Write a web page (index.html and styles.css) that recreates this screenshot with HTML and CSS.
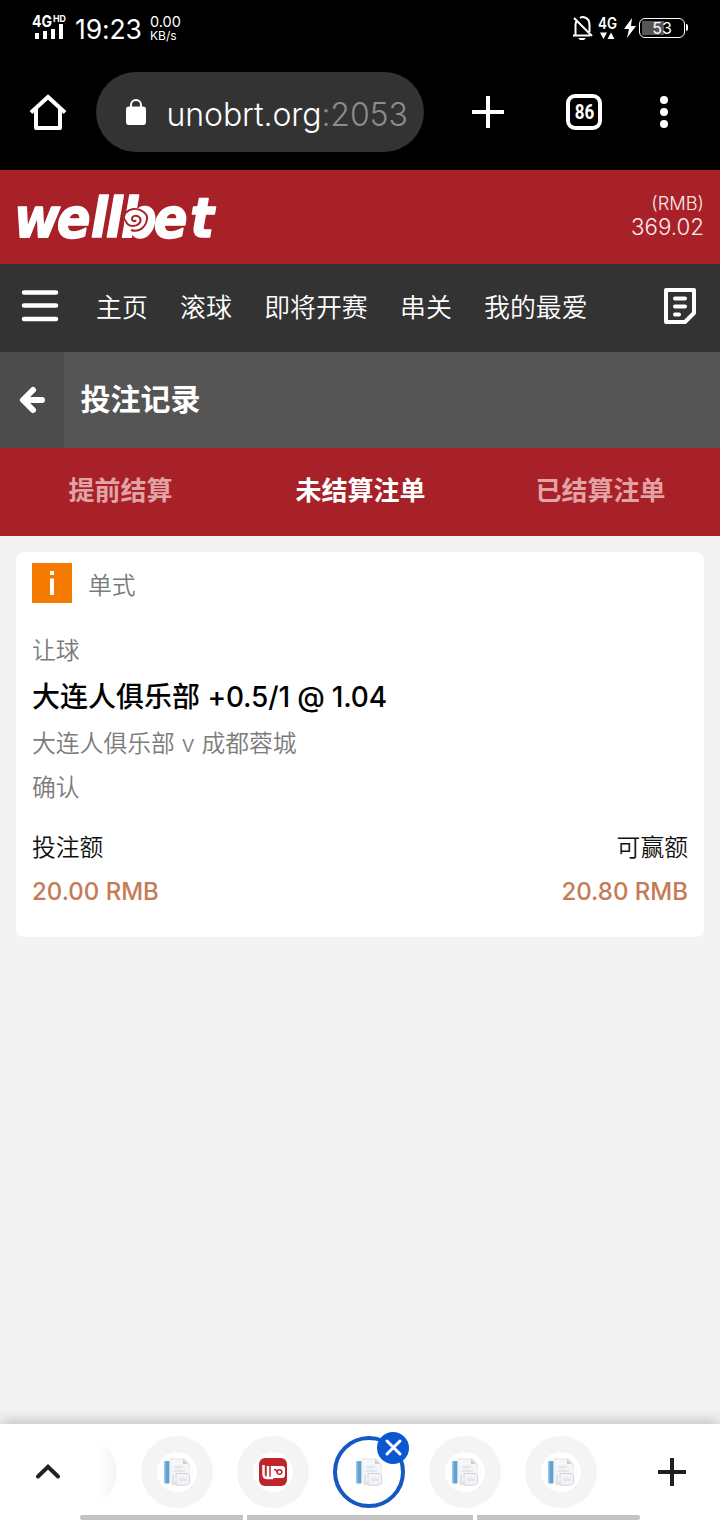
FILE: index.html
```html
<!DOCTYPE html>
<html lang="zh-CN">
<head>
<meta charset="utf-8">
<title>投注记录</title>
<link rel="stylesheet" href="styles.css">
</head>
<body>
<div class="phone">
  <div class="status">
    <div class="signal">
      <svg width="36" height="30" viewBox="0 0 36 30"><text class="net" x="0" y="12.5" textLength="20" lengthAdjust="spacingAndGlyphs">4G</text><text class="hd" x="21" y="8" textLength="13" lengthAdjust="spacingAndGlyphs">HD</text><path d="M5 19v6M13 17v8M21 15v10M29 10v15" stroke="#fff" stroke-width="4" stroke-linecap="butt" fill="none"/></svg>
    </div>
    <span class="clock">19:23</span>
    <div class="speed"><span class="rate">0.00</span><span class="unit">KB/s</span></div>
    <svg class="bell" width="22" height="26" viewBox="0 0 22 26" fill="none" stroke="#fff" stroke-width="2"><path d="M3.500 20V10q0-3 2-5M8 3q2-1.500 5-.5 4.500 1.500 4.500 7.500v7M1 20.500h17M2 3l18 18"/><path d="M6 23h8l-2 2H8z" fill="#fff" stroke="none"/></svg>
    <svg class="data" width="20" height="26" viewBox="0 0 20 26" fill="#fff"><text class="net-small" x="0" y="14" textLength="19" lengthAdjust="spacingAndGlyphs">4G</text><path d="M2 17.500h7L5.500 24zM9.500 24h7L13 17.500z"/></svg>
    <svg class="bolt" width="12" height="20" viewBox="0 0 12 20" fill="#fff"><path d="M8 0 0 11h5l-2 9 9-12H7z"/></svg>
    <div class="battery">53</div>
  </div>

  <div class="browser">
    <svg class="home" width="36" height="38" viewBox="0 0 36 38" fill="none" stroke="#fff" stroke-width="4" stroke-linejoin="round"><path d="M1 19.500 18 4l17 15.500" stroke-linejoin="miter"/><path d="M6 16v19h24V16"/></svg>
    <div class="address">
      <svg width="20" height="28" viewBox="0 0 20 28"><rect y="8.500" width="20" height="18.500" rx="3" fill="#fff"/><path d="M5 10V7a5 5 0 0 1 10 0v3" fill="none" stroke="#fff" stroke-width="2"/></svg>
      <span class="url">unobrt.org<span class="port">:2053</span></span>
    </div>
    <svg class="new" width="32" height="32" viewBox="0 0 32 32"><path d="M16 0v32M0 16h32" stroke="#fff" stroke-width="4"/></svg>
    <div class="count"><span>86</span></div>
    <svg class="more" width="8" height="32" viewBox="0 0 8 32" fill="#fff"><circle cx="4" cy="4" r="4"/><circle cx="4" cy="16" r="4"/><circle cx="4" cy="28" r="4"/></svg>
  </div>

  <header class="brand">
    <svg width="206" height="54" viewBox="0 0 206 54">
      <g transform="scale(.89 1)"><text class="logo" x="-1 47 85 102 119 156 197" y="43.500">wellbet</text></g>
      <circle cx="121" cy="29" r="12" fill="#fff"/>
      <path d="M106 22c5 0 5-5 12-6 8-1 15 5 14 10-1 8-8 14-16 11M106 22c5 3 4 11 12 11 5 0 9-4 7-8-2-3-8-3-8 1 0 2 3 3 4 1" fill="none" stroke="#a82128" stroke-width="2"/>
    </svg>
    <div class="balance"><span class="currency">(RMB)</span><span class="amount">369.02</span></div>
  </header>

  <nav class="nav">
    <svg class="burger" width="36" height="32" viewBox="0 0 36 32"><path d="M2 2.500h32M2 15.500h32M2 29h32" stroke="#fff" stroke-width="4.500" stroke-linecap="round"/></svg>
    <div class="links"><a>主页</a><a>滚球</a><a>即将开赛</a><a>串关</a><a>我的最爱</a></div>
    <svg class="slip" width="32" height="36" viewBox="0 0 32 36" fill="none" stroke="#fff" stroke-width="4"><path d="M2 2h28v23l-9 9H2z" stroke-linejoin="round"/><path d="M11 10.500h10M11 18.500h10M11 26.500h4" stroke-linecap="round"/></svg>
  </nav>

  <div class="titlebar">
    <div class="back"><svg width="26" height="26" viewBox="0 0 26 26"><path d="M14 3 4 13l10 10M5 13h18" fill="none" stroke="#fff" stroke-width="6" stroke-linecap="round" stroke-linejoin="round"/></svg></div>
    <h1>投注记录</h1>
  </div>

  <div class="tabs"><span>提前结算</span><span class="on">未结算注单</span><span>已结算注单</span></div>

  <main class="content">
    <section class="card">
      <div class="kind"><svg width="40" height="40" viewBox="0 0 40 40"><path fill="#f57a00" d="M0 0h40v40H0z"/><path fill="#fff" d="M18 8h4v4h-4zM18 15.500h4v16.500h-4z"/></svg><span>单式</span></div>
      <p class="market">让球</p>
      <p class="pick">大连人俱乐部 <span class="odds">+0.5/1 @ 1.04</span></p>
      <p class="match">大连人俱乐部 v 成都蓉城</p>
      <p class="state">确认</p>
      <div class="row labels"><span>投注额</span><span>可赢额</span></div>
      <div class="row money"><span>20.00 RMB</span><span>20.80 RMB</span></div>
    </section>
  </main>

  <footer class="dock">
    <svg class="up" width="24" height="15" viewBox="0 0 24 15"><path d="M2 12.500 12 2.800l10 9.700" fill="none" stroke="#202124" stroke-width="4" stroke-linecap="round"/></svg>
    <div class="strip">
      <div class="sliver"></div>
      <div class="tab"><div class="disc"><svg width="28" height="28"><use href="#docs"/></svg></div></div>
      <div class="tab"><div class="disc"><svg width="28" height="28" viewBox="0 0 28 28"><rect width="28" height="28" rx="6" fill="#be252d"/><path d="M4.500 7v9q0 4 4 4H13V8M9 8v11" fill="none" stroke="#fff" stroke-width="2.500"/><path d="M14 17V8h9q3 0 3 3v6q0 3-3 3H13v-3z" fill="#fff"/><path d="M15 11.500q3 0 3 3" stroke="#be252d" stroke-width="1.500" fill="none"/><circle cx="20.500" cy="14" r="2.300" fill="none" stroke="#be252d" stroke-width="1.500"/></svg></div></div>
      <div class="tab current"><div class="disc"><svg width="28" height="28"><use href="#docs"/></svg></div>
        <svg class="close" width="32" height="32" viewBox="0 0 32 32"><circle cx="16" cy="16" r="16" fill="#0b57d0"/><path d="m10 9 13 13m0-13L10 22" stroke="#fff" stroke-width="3" stroke-linecap="round"/></svg></div>
      <div class="tab"><div class="disc"><svg width="28" height="28"><use href="#docs"/></svg></div></div>
      <div class="tab"><div class="disc"><svg width="28" height="28"><use href="#docs"/></svg></div></div>
    </div>
    <svg class="add" width="28" height="28" viewBox="0 0 28 28"><path d="M14 0v28M0 14h28" stroke="#202124" stroke-width="4"/></svg>
    <div class="gesture"><i></i><i></i><i></i></div>
  </footer>
</div>
<svg class="defs" width="0" height="0">
  <defs>
    <linearGradient id="spine" x2="1"><stop stop-color="#a9cfe7"/><stop offset=".4" stop-color="#64a7d3"/><stop offset="1" stop-color="#5a9dca"/></linearGradient>
    <g id="docs"><rect x="1" y="3" width="5.500" height="22.500" rx="1" fill="url(#spine)"/><path d="M7 1h15l4 5v17l-3 4H10l-3-3z" fill="#f7f7f8" stroke="#e4e4e6"/><path d="M20 1v5h5" fill="#cfcfd1"/><path d="M11 9h9M11 13h11" stroke="#e4e6ef" stroke-width="2.500"/><path d="M10 16v9h4" stroke="#e2e2e4" stroke-width="2" fill="none"/><path d="M13 15.500h11l2.500 2V25l-2 2H13z" fill="#f4f4f8" stroke="#d4d4d8"/><path d="M16 21.500h8" stroke="#e4e7f0" stroke-width="3.500"/></g>
  </defs>
</svg>
</body>
</html>
```
FILE: styles.css
```css
* { box-sizing: border-box; }
body { margin: 0; font-family: Inter, "Noto Sans CJK SC", sans-serif; }
svg { display: block; flex: none; overflow: visible; }
p, h1 { margin: 0; }
.defs { position: absolute; }
.phone { width: 720px; height: 1520px; display: flex; flex-direction: column; background: #f3f3f3; overflow: hidden; }

.status { height: 56px; background: #000; color: #fff; display: flex; padding: 14px 32px 0; }
.signal { width: 43px; }
.net { font: 700 16px Inter, sans-serif; fill: #fff; }
.hd { font: 700 9.500px Inter, sans-serif; fill: #fff; }
.net-small { font: 600 15.500px Inter, sans-serif; fill: #fff; }
.clock { width: 75px; font-size: 26.500px; line-height: 31px; letter-spacing: -.1px; white-space: nowrap; }
.speed { display: flex; flex-direction: column; margin-top: 1px; white-space: nowrap; }
.rate { font-size: 14.500px; line-height: 14px; }
.unit { font-size: 12px; line-height: 13px; }
.bell { margin: 1px 0 0 auto; }
.data { margin: 1px 0 0 4px; }
.bolt { margin: 4px 0 0 6px; }
.battery { position: relative; width: 46px; height: 20px; margin: 4px 3px 0 3px; border: 1.500px solid #fff; border-radius: 6px; font-size: 16px; line-height: 18px; text-align: center; background: linear-gradient(90deg, #555 22px, transparent 22px) 2px 2px / 40px 14px no-repeat; }
.battery::after { content: ""; position: absolute; right: -4px; top: 5px; width: 2px; height: 7px; background: #fff; border-radius: 0 2px 2px 0; }

.browser { height: 114px; background: #000; display: flex; padding: 16px 52px 0 30px; }
.home { margin-top: 21px; }
.address { margin-left: 30px; width: 328px; height: 80px; border-radius: 40px; background: #333; display: flex; padding: 26px 0 0 30px; color: #fff; }
.url { margin-left: 20.500px; font-size: 32px; font-weight: 300; line-height: 33px; letter-spacing: -.08px; white-space: nowrap; }
.port { color: #8c8c8c; }
.new { margin: 24px 0 0 48px; }
.count { margin: 22px 0 0 62px; width: 36px; height: 36px; border: 4px solid #fff; border-radius: 9px; color: #fff; font: 700 20px/28px Roboto, sans-serif; display: flex; justify-content: center; }
.count span { transform: scaleX(.85); }
.more { margin: 24px 0 0 58px; }

.brand { height: 94px; background: #a82128; display: flex; justify-content: space-between; padding: 23px 16px 0 15px; color: #fbe9ea; }
.logo { font: italic 700 56px "DejaVu Sans", sans-serif; fill: #fff; stroke: #fff; stroke-width: 1.500px; stroke-linejoin: round; }
.balance { display: flex; flex-direction: column; align-items: flex-end; }
.currency { font-size: 18.300px; line-height: 21px; font-weight: 350; }
.amount { font-size: 22.300px; line-height: 26px; font-weight: 350; }

.nav { height: 88px; background: #333; display: flex; padding: 24px 24px 0 22px; }
.burger { margin-top: 2px; }
.links { display: flex; gap: 32.300px; margin-left: 38px; font-size: 25.900px; line-height: 39px; font-weight: 350; color: #fff; white-space: nowrap; }
.slip { margin-left: auto; }

.titlebar { height: 96px; background: #555; display: flex; color: #fff; }
.back { width: 64px; background: #4c4c4c; display: flex; align-items: center; justify-content: center; }
h1 { margin-left: 16.500px; font-size: 30px; line-height: 95px; font-weight: 700; }

.tabs { height: 88px; background: #a82128; display: grid; grid-template-columns: 240px 240px 240px; text-align: center; font-size: 26px; line-height: 86px; font-weight: 700; color: #e2a3a6; }
.tabs span { padding-left: 1px; }
.tabs .on { color: #fff; }

.content { flex: 1; padding: 16px; }
.card { height: 385px; background: #fff; border-radius: 8px; padding: 11px 16px 0; font-size: 23.800px; font-weight: 350; color: #7b7b7b; }
.kind { display: flex; gap: 16px; line-height: 46px; height: 44px; }
.market { margin-top: 22px; line-height: 44px; }
.pick { line-height: 48px; font-size: 28px; font-weight: 500; color: #000; white-space: nowrap; }
.odds { letter-spacing: -.18px; }
.match { line-height: 46px; }
.state { line-height: 42px; }
.row { display: flex; justify-content: space-between; }
.labels { margin-top: 17px; line-height: 44px; color: #111; }
.money { line-height: 44px; font-size: 24px; font-weight: 500; color: #c57b55; }

.dock { position: relative; height: 96px; background: #fff; display: flex; padding: 0 34px 0 36px; box-shadow: 0 -2px 14px rgba(0,0,0,.24); }
.up { margin-top: 40px; }
.strip { display: flex; gap: 24px; margin-left: 37px; padding-top: 12px; }
.sliver { width: 20px; height: 72px; background: linear-gradient(90deg, #fff, #f2f4f6); clip-path: circle(36px at -16px 36px); }
.tab { position: relative; width: 72px; height: 72px; border-radius: 50%; background: #f2f4f6; display: flex; align-items: center; justify-content: center; }
.disc { width: 40px; height: 40px; border-radius: 50%; background: #fff; display: flex; align-items: center; justify-content: center; }
.current { background: #fff; border: 4px solid #1558c4; }
.close { position: absolute; right: -8px; top: -8px; }
.add { margin: 34px 0 0 auto; }
.gesture { position: absolute; left: 80px; bottom: 0; width: 560px; height: 5px; display: grid; grid-template-columns: 163px 226px 163px; gap: 4px; border-radius: 3px; overflow: hidden; }
.gesture i { background: #c3c3c3; }
```
